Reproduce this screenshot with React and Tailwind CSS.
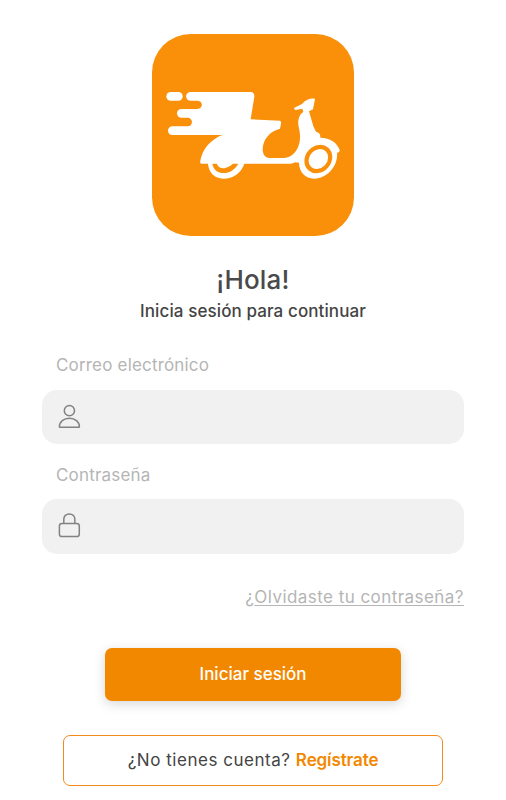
// App.jsx
import { useState } from 'react';

const ScooterLogo = () => (
    <svg viewBox="21 17 606 606" className="w-[202px] h-[202px]" aria-hidden="true">
        <rect x="21" y="17" width="606" height="606" rx="116" fill="#fa900a" />
        {/* Estelas y caja de reparto */}
        <rect x="64" y="191" width="49" height="26" rx="13" fill="#fff" />
        <path
            fill="#fff"
            d="M136 191H317Q329 192 328 205L317 273L405 277Q409 279 408 286L405 301C376 308 353 332 353 364C354 382 363 389 378 389H412C450 388 466 355 465 322C465 302 456 288 461 272Q464 257 475 251L472 241L452 245Q446 244 448 238L471 227Q478 218 487 214Q498 209 510 211L504 243L492 249L505 294L513 310Q527 313 526 328C555 328 577 344 584 365Q585 374 576 373C580 413 547 451 508 451C480 450 462 430 462 403L450 402Q444 406 437 406H298C289 433 264 451 235 451C209 450 191 432 189 406H169Q164 405 166 397C172 362 198 333 232 320H81C65 319 65 296 81 294H128C145 293 145 269 129 268H108C92 267 92 243 108 242H157C175 241 175 218 158 217H136C119 216 119 192 136 191Z"
        />
        {/* Ruedas */}
        <path fill="#fa900a" d="M202 406H215C222 422 237 422 251 415Q259 411 264 406H280C270 424 254 434 236 434C218 434 205 424 202 406Z" />
        <ellipse cx="520" cy="392" rx="39" ry="45" transform="rotate(42 520 392)" fill="#fa900a" />
        <ellipse cx="520" cy="392" rx="27" ry="32" transform="rotate(42 520 392)" fill="#fff" />
    </svg>
);

const UserIcon = () => (
    <svg viewBox="0 0 24 26" className="w-6 h-[26px]" fill="none" stroke="#828282" strokeWidth="1.5">
        <circle cx="12.4" cy="6.7" r="5.1" />
        <path d="M2.4 22.8C2.4 17.7 6.7 14.2 12.4 14.2S22.4 17.7 22.4 22.8Q22.4 23.3 21.9 23.3H2.9Q2.4 23.3 2.4 22.8Z" />
    </svg>
);

const LockIcon = () => (
    <svg viewBox="0 0 24 26" className="w-6 h-[26px]" fill="none" stroke="#828282" strokeWidth="1.5">
        <rect x="2.4" y="10.5" width="19.9" height="13" rx="2.6" />
        <path d="M6.8 10.5V6.2C6.8 3 9.1 0.9 12.3 0.9S17.8 3 17.8 6.2V10.5" />
    </svg>
);

const Field = ({ id, label, type, icon: Icon, value, onChange }) => (
    <div>
        <label htmlFor={id} className="block h-6 mb-[12.5px] pl-3.5 text-[17px] leading-6 tracking-[0.18px] text-[#b5b5b5]">
            {label}
        </label>
        <div className="flex items-center h-[54.5px] pl-[15px] pr-4 gap-3 rounded-[15px] bg-[#f1f1f1]">
            <Icon />
            <input
                id={id}
                type={type}
                value={value}
                onChange={(e) => onChange(e.target.value)}
                className="flex-1 min-w-0 bg-transparent outline-none text-[17px] text-[#444]"
            />
        </div>
    </div>
);

const App = () => {
    const [correo, setCorreo] = useState('');
    const [clave, setClave] = useState('');

    return (
        <main className="flex flex-col items-center w-full h-[800px] pt-[34px] overflow-hidden bg-white font-['Inter',sans-serif]">
            <ScooterLogo />

            <h1 className="mt-7 text-[26px] leading-8 font-medium tracking-[0.2px] text-[#4a4a4a]">¡Hola!</h1>
            <p className="mt-[3px] text-[17px] leading-6 font-medium tracking-[0.1px] text-[#444] whitespace-nowrap">
                Inicia sesión para continuar
            </p>

            <form className="flex flex-col w-[422px] mt-[30px]" onSubmit={(e) => e.preventDefault()}>
                <Field id="correo" label="Correo electrónico" type="email" icon={UserIcon} value={correo} onChange={setCorreo} />
                <div className="h-[18.5px]" />
                <Field id="clave" label="Contraseña" type="password" icon={LockIcon} value={clave} onChange={setClave} />

                <a href="#" className="self-end mt-[31px] text-[17px] leading-6 tracking-[0.45px] text-[#b5b5b5] whitespace-nowrap">
                    ¿<span className="underline underline-offset-2 decoration-1">Olvidaste tu contraseña?</span>
                </a>

                <button
                    type="submit"
                    className="w-[295.5px] h-[53.5px] mt-[39px] ml-[63.3px] pt-px rounded-[7px] bg-[#f28700] text-[17px] font-medium text-white shadow-[0_3px_12px_rgba(0,0,0,0.16)]"
                >
                    Iniciar sesión
                </button>

                <button
                    type="button"
                    className="w-[379.5px] h-[50.5px] mt-[34px] ml-[21.3px] rounded-[7px] border border-[#f28a1c] text-[17px] text-[#444] whitespace-nowrap"
                >
                    <span className="tracking-[0.53px]">¿No tienes cuenta? </span>
                    <span className="font-semibold tracking-[-0.1px] text-[#f28700]">Regístrate</span>
                </button>
            </form>
        </main>
    );
};

export default App;
